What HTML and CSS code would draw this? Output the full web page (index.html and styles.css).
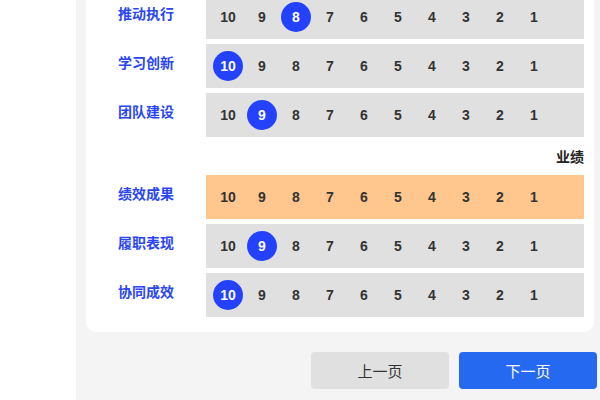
FILE: index.html
```html
<!DOCTYPE html>
<html lang="zh">
<head>
<meta charset="utf-8">
<link rel="stylesheet" href="styles.css">
</head>
<body>
<div class="page">
  <div class="side"></div>
  <main class="main">
    <section class="card">
      <div class="row">
        <div class="label">推动执行</div>
        <div class="scale">
          <span class="n">10</span><span class="n">9</span><span class="n on">8</span><span class="n">7</span><span class="n">6</span><span class="n">5</span><span class="n">4</span><span class="n">3</span><span class="n">2</span><span class="n">1</span>
        </div>
      </div>
      <div class="row">
        <div class="label">学习创新</div>
        <div class="scale">
          <span class="n on">10</span><span class="n">9</span><span class="n">8</span><span class="n">7</span><span class="n">6</span><span class="n">5</span><span class="n">4</span><span class="n">3</span><span class="n">2</span><span class="n">1</span>
        </div>
      </div>
      <div class="row">
        <div class="label">团队建设</div>
        <div class="scale">
          <span class="n">10</span><span class="n on">9</span><span class="n">8</span><span class="n">7</span><span class="n">6</span><span class="n">5</span><span class="n">4</span><span class="n">3</span><span class="n">2</span><span class="n">1</span>
        </div>
      </div>
      <div class="heading">业绩</div>
      <div class="row">
        <div class="label">绩效成果</div>
        <div class="scale warn">
          <span class="n">10</span><span class="n">9</span><span class="n">8</span><span class="n">7</span><span class="n">6</span><span class="n">5</span><span class="n">4</span><span class="n">3</span><span class="n">2</span><span class="n">1</span>
        </div>
      </div>
      <div class="row">
        <div class="label">履职表现</div>
        <div class="scale">
          <span class="n">10</span><span class="n on">9</span><span class="n">8</span><span class="n">7</span><span class="n">6</span><span class="n">5</span><span class="n">4</span><span class="n">3</span><span class="n">2</span><span class="n">1</span>
        </div>
      </div>
      <div class="row">
        <div class="label">协同成效</div>
        <div class="scale">
          <span class="n on">10</span><span class="n">9</span><span class="n">8</span><span class="n">7</span><span class="n">6</span><span class="n">5</span><span class="n">4</span><span class="n">3</span><span class="n">2</span><span class="n">1</span>
        </div>
      </div>
    </section>
    <div class="actions">
      <button class="btn prev">上一页</button>
      <button class="btn next">下一页</button>
    </div>
  </main>
</div>
</body>
</html>
```
FILE: styles.css
```css
html, body {
  margin: 0;
  padding: 0;
  height: 100%;
  overflow: hidden;
  font-family: "Liberation Sans", "Noto Sans CJK SC", sans-serif;
}
.page {
  display: flex;
  height: 400px;
  background: #ffffff;
}
.side {
  width: 76px;
  flex: none;
}
.main {
  flex: 1;
  background: #f4f4f4;
  padding: 0 3px 0 10px;
  display: flex;
  flex-direction: column;
}
.card {
  background: #ffffff;
  border-radius: 0 0 10px 10px;
  margin: -5px 3px 0 0;
  padding: 0 10px 15px 0;
  display: flex;
  flex-direction: column;
  gap: 5px;
}
.row {
  display: flex;
  align-items: flex-start;
}
.label {
  width: 120px;
  flex: none;
  text-align: center;
  padding-top: 8px;
  line-height: 20px;
  font-size: 14px;
  font-weight: bold;
  color: #2a46f2;
  font-family: "Noto Sans CJK SC", sans-serif;
}
.scale {
  flex: 1;
  height: 44px;
  background: #e0e0e0;
  display: flex;
  align-items: center;
  padding-left: 5px;
}
.scale.warn {
  background: #ffc68e;
}
.n {
  width: 34px;
  display: flex;
  justify-content: center;
  align-items: center;
  font-size: 14px;
  font-weight: bold;
  color: #333333;
}
.n.on {
  color: #ffffff;
  position: relative;
  z-index: 0;
  height: 30px;
}
.n.on::after {
  content: "";
  position: absolute;
  z-index: -1;
  width: 30px;
  height: 30px;
  border-radius: 50%;
  background: #2442fe;
  left: 2px;
  top: 0;
}
.heading {
  text-align: right;
  font-size: 14px;
  font-weight: bold;
  line-height: 20px;
  padding: 4px 0 4px;
  color: #222222;
  font-family: "Noto Sans CJK SC", sans-serif;
}
.actions {
  display: flex;
  justify-content: flex-end;
  gap: 10px;
  margin-top: 20px;
}
.btn {
  width: 138px;
  height: 37px;
  border: none;
  border-radius: 4px;
  font-size: 15px;
  font-family: "Noto Sans CJK SC", sans-serif;
  padding: 0;
}
.prev {
  background: #e0e0e0;
  color: #333333;
}
.next {
  background: #2569f1;
  color: #ffffff;
}
```
